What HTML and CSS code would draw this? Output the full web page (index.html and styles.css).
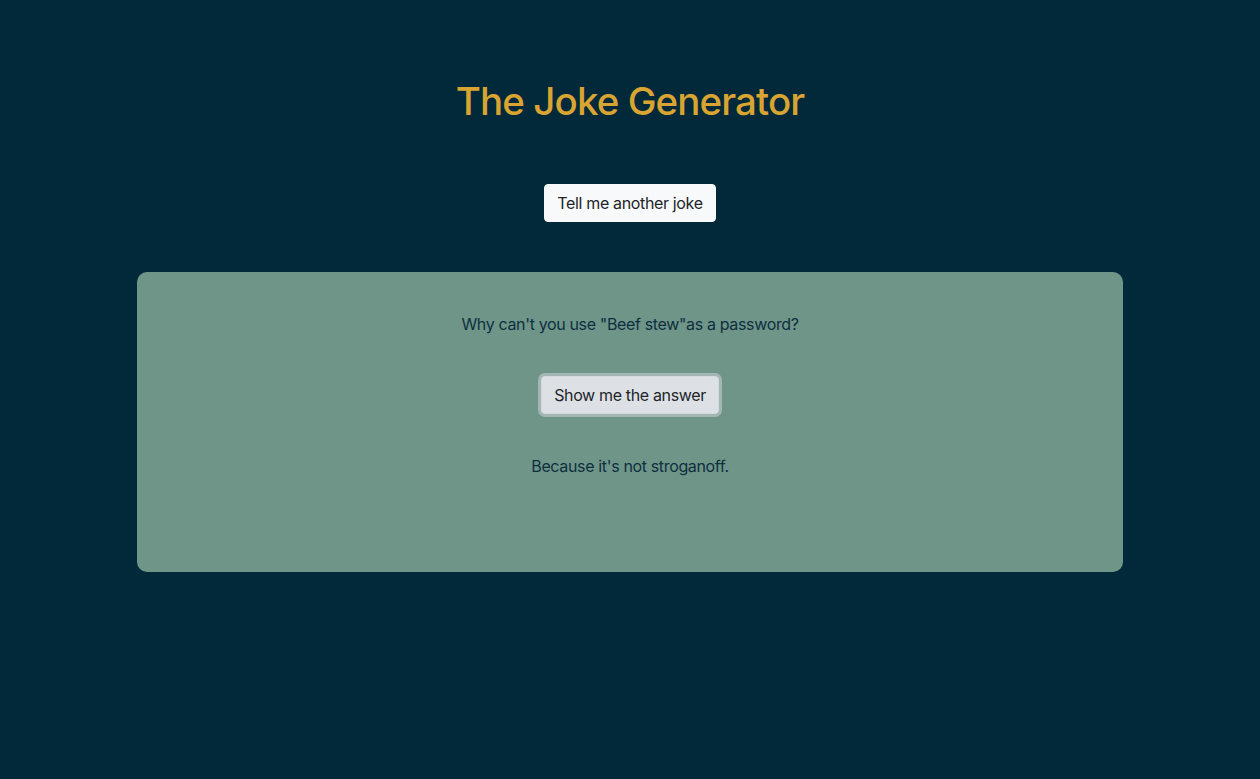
FILE: index.html
```html
<!DOCTYPE html>
<html lang="en">
<head>
<meta charset="utf-8">
<title>The Joke Generator</title>
<link rel="stylesheet" href="styles.css">
</head>
<body>
<main class="app">
  <h1 class="title">The Joke Generator</h1>
  <button class="btn btn-light">Tell me another joke</button>
  <section class="card">
    <p class="setup">Why can't you use "Beef stew"as a password?</p>
    <button class="btn btn-focus">Show me the answer</button>
    <p class="punchline">Because it's not stroganoff.</p>
  </section>
</main>
</body>
</html>
```
FILE: styles.css
```css
html, body {
  margin: 0;
  padding: 0;
  background: #01293a;
  height: 100%;
}
body {
  font-family: Inter, "Noto Sans", "Liberation Sans", sans-serif;
  font-size: 16px;
  line-height: 1.5;
  letter-spacing: -0.35px;
  color: #212529;
}
.app {
  display: flex;
  flex-direction: column;
  align-items: center;
  padding-top: 77px;
}
.title {
  margin: 0;
  font-size: 38.5px;
  line-height: 48px;
  font-weight: 500;
  letter-spacing: -0.9px;
  color: #d9a431;
}
.btn {
  font-family: inherit;
  font-size: 16px;
  line-height: 24px;
  letter-spacing: -0.35px;
  padding: 6px 12px;
  border: 1px solid transparent;
  border-radius: 4px;
  color: #212529;
  cursor: pointer;
}
.btn-light {
  margin-top: 59px;
  background: #f8f9fa;
  border-color: #f8f9fa;
}
.btn-focus {
  margin-top: 40px;
  background: #dde1e5;
  border-color: #d6dade;
  box-shadow: 0 0 0 3px rgba(216, 217, 219, 0.5);
}
.card {
  margin-top: 50px;
  width: 986px;
  height: 300px;
  box-sizing: border-box;
  background: #6f9589;
  border-radius: 10px;
  display: flex;
  flex-direction: column;
  align-items: center;
  padding-top: 40px;
  color: #0e2f3e;
}
.setup, .punchline {
  margin: 0;
}
.punchline {
  margin-top: 40px;
}
```
